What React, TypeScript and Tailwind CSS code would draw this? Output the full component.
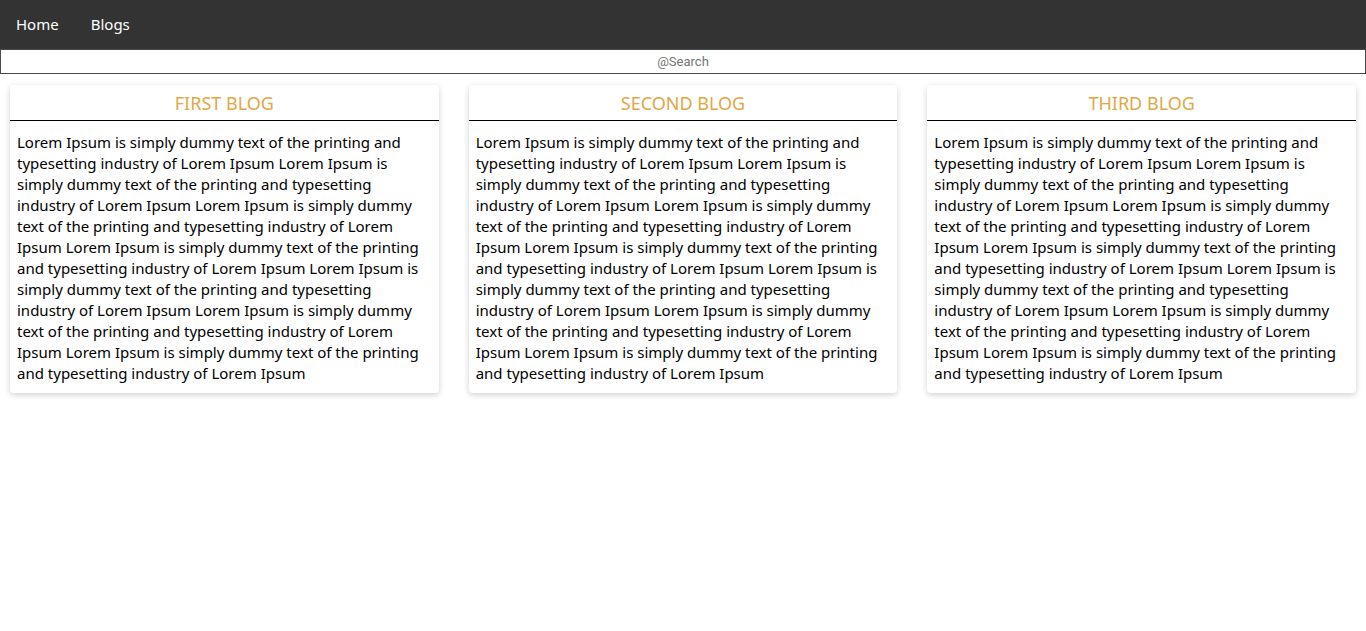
const unit =
  "Lorem Ipsum is simply dummy text of the printing and typesetting industry of Lorem Ipsum";
const text = Array(7).fill(unit).join(" ");

function Card({ title }: { title: string }) {
  return (
    <div className="flex-1 min-w-0 bg-white rounded-[4px] shadow-[0_2px_6px_rgba(0,0,0,0.18)]">
      <div className="h-[36px] border-b border-black flex items-center justify-center text-[18px] text-[#e0a845] pt-[1px]">
        {title}
      </div>
      <p className="px-[7px] pt-[11px] pb-[9px] text-[15px] leading-[21px] text-black">{text}</p>
    </div>
  );
}

export default function App() {
  return (
    <div className="min-h-[631px] bg-white" style={{ fontFamily: '"Noto Sans", sans-serif' }}>
      <nav className="h-[49px] bg-[#333333] flex items-center pl-4 gap-[32px] text-white text-[15px]">
        <span>Home</span>
        <span>Blogs</span>
      </nav>
      <input
        className="block w-full h-[25px] border border-[#4a4a4a] text-center text-[13px] outline-none placeholder:text-[#757575]"
        style={{ fontFamily: 'Roboto, sans-serif' }}
        placeholder="@Search"
      />
      <div className="flex gap-[30px] px-[10px] pt-[11px]">
        <Card title="FIRST BLOG" />
        <Card title="SECOND BLOG" />
        <Card title="THIRD BLOG" />
      </div>
    </div>
  );
}
